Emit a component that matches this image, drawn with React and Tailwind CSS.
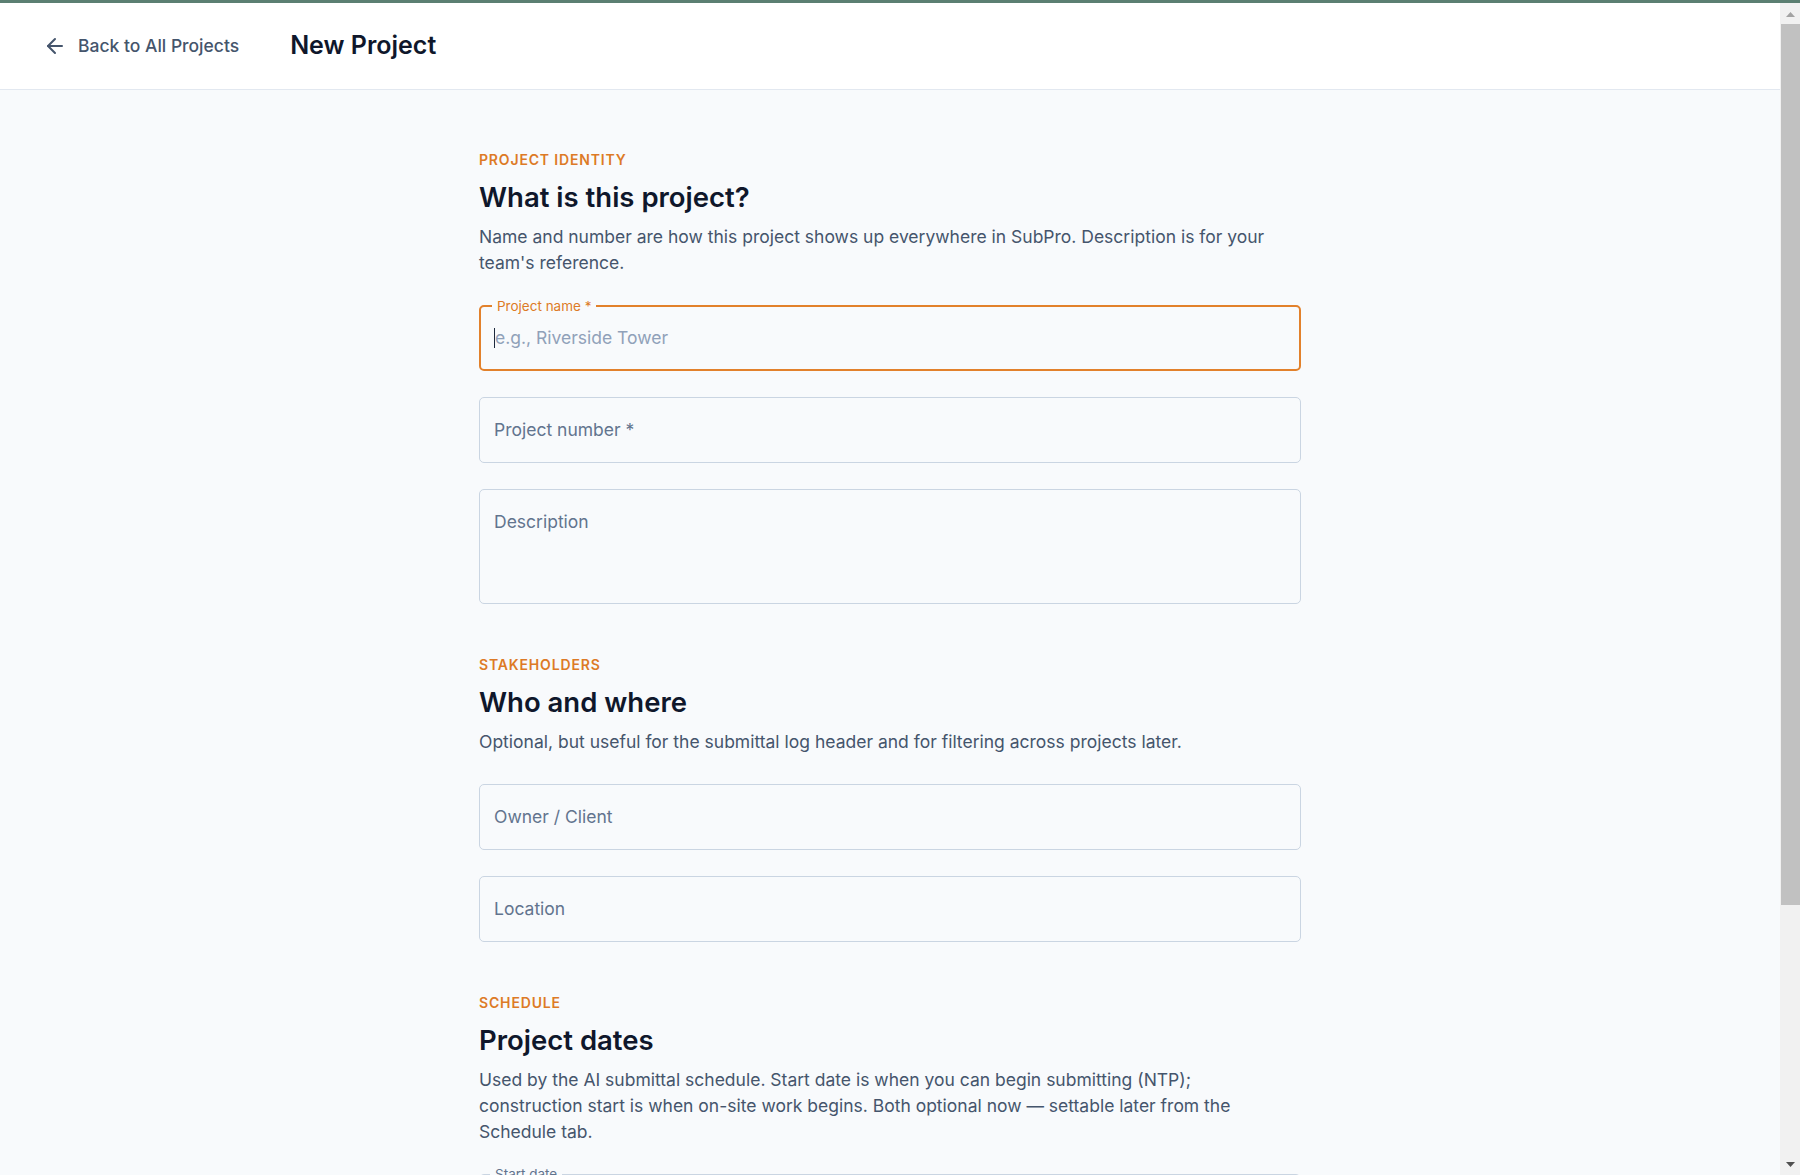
import { ArrowLeft, CalendarDays } from "lucide-react"

const ORANGE = "text-[#dd7a26]"

const Section = ({ eyebrow, title, desc, children, first }) => {
  return (
    <section className={first ? "" : "mt-[53px]"}>
      <div className={`text-[14px] leading-4 font-semibold tracking-[0.06em] uppercase ${ORANGE}`}>{eyebrow}</div>
      <h2 className="mt-3 text-[27.5px] leading-[34px] font-semibold text-slate-900">{title}</h2>
      <p className="mt-2.5 max-w-[800px] text-[17.5px] leading-[26px] text-slate-600">{desc}</p>
      <div className="mt-[29px] flex flex-col gap-[26px]">{children}</div>
    </section>
  )
}

const Field = ({ label, tall }) => {
  return (
    <div className={`rounded-[5px] border border-slate-300 px-[14px] text-[17.5px] text-slate-500 ${tall ? "h-[115px] pt-[20px] leading-6" : "h-[66px] flex items-center"}`}>
      {label}
    </div>
  )
}

const FocusedField = ({ label, placeholder }) => {
  return (
    <div className="relative h-[66px] rounded-[5px] border-2 border-[#e2812b] px-[13px] flex items-center text-[17.5px]">
      <span className={`absolute -top-[9px] left-[11px] px-[5px] bg-slate-50 text-[13.5px] leading-4 ${ORANGE}`}>{label}</span>
      <span className="w-px h-5 bg-slate-800" />
      <span className="text-slate-400">{placeholder}</span>
    </div>
  )
}

const DateField = ({ label }) => {
  return (
    <div className="relative h-[66px] rounded-[5px] border border-slate-300 px-[14px] flex items-center justify-between text-[17.5px]">
      <span className="absolute -top-[9px] left-[10px] px-[5px] bg-slate-50 text-[13.5px] leading-4 text-slate-500">{label}</span>
      <span className="text-slate-400">mm/dd/yyyy</span>
      <CalendarDays size={20} className="text-slate-500" />
    </div>
  )
}

// fake windows-style scrollbar (headless hides the real one)
const Scrollbar = () => {
  return (
    <div className="w-5 shrink-0 bg-[#f1f1f1] flex flex-col">
      <div className="h-5 flex items-center justify-center pt-[2px]">
        <svg width="9" height="5" viewBox="0 0 9 5"><polygon points="4.5,0 9,5 0,5" fill="#a3a3a3" /></svg>
      </div>
      <div className="flex-1 pt-px">
        <div className="ml-px h-[881px] bg-[#c1c1c1]" />
      </div>
      <div className="h-5 flex items-center justify-center pb-[2px]">
        <svg width="9" height="5" viewBox="0 0 9 5"><polygon points="0,0 9,0 4.5,5" fill="#505050" /></svg>
      </div>
    </div>
  )
}

export default function App() {
  return (
    <div className="h-screen flex flex-col bg-slate-50 font-['Inter',sans-serif]">
      <div className="h-[3px] bg-[#5b7f72] shrink-0" />
      <div className="flex-1 min-h-0 flex">
        <div className="flex-1 min-w-0 overflow-hidden">
          <header className="h-[87px] bg-white border-b border-slate-200 flex items-center pl-[43px]">
            <a href="#" className="flex items-center gap-[11px] text-[17.5px] font-medium text-slate-600">
              <ArrowLeft size={24} strokeWidth={2} />
              Back to All Projects
            </a>
            <h1 className="ml-[51px] text-[25px] font-semibold text-slate-900">New Project</h1>
          </header>

          <main className="max-w-[822px] mx-auto pt-[62px] pb-[90px]">
            <Section
              first
              eyebrow="Project identity"
              title="What is this project?"
              desc="Name and number are how this project shows up everywhere in SubPro. Description is for your team's reference."
            >
              <FocusedField label="Project name *" placeholder="e.g., Riverside Tower" />
              <Field label="Project number *" />
              <Field label="Description" tall />
            </Section>

            <Section
              eyebrow="Stakeholders"
              title="Who and where"
              desc="Optional, but useful for the submittal log header and for filtering across projects later."
            >
              <Field label="Owner / Client" />
              <Field label="Location" />
            </Section>

            <Section
              eyebrow="Schedule"
              title="Project dates"
              desc="Used by the AI submittal schedule. Start date is when you can begin submitting (NTP); construction start is when on-site work begins. Both optional now — settable later from the Schedule tab."
            >
              <DateField label="Start date" />
              <DateField label="Construction start" />
            </Section>

            <div className="mt-12 flex justify-end gap-3">
              <button className="h-10 px-5 rounded-md text-[15px] font-medium text-slate-600">Cancel</button>
              <button className="h-10 px-5 rounded-md bg-[#dd7a26] text-[15px] font-semibold text-white">Create Project</button>
            </div>
          </main>
        </div>
        <Scrollbar />
      </div>
    </div>
  )
}
